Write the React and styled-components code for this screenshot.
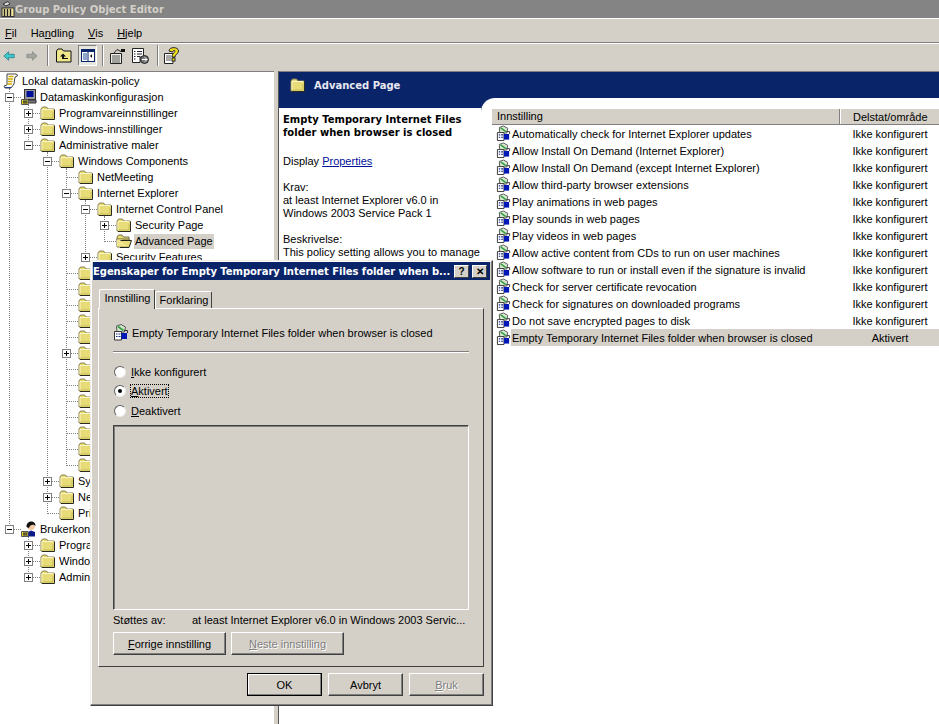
import styled, { createGlobalStyle } from "styled-components";

const GlobalStyle = createGlobalStyle`
  html, body {
    margin: 0;
    padding: 0;
    background: #d4d0c8;
  }
  body {
    font-family: "Liberation Sans", Arial, sans-serif;
    font-size: 11px;
    color: #000;
  }
  u { text-underline-offset: 1px; }
`;

const FolderIcon = () => (
  <svg width="16" height="14" viewBox="0 0 16 14">
    <path d="M1 3 L2.5 1 H6.5 L8 3 H14 V13 H1 Z" fill="#e4d870" stroke="#8a8350" strokeWidth="1" />
    <rect x="2" y="4" width="12" height="9" fill="#e8dc78" />
    <path d="M2 12 H13 V6" stroke="#c8bc58" fill="none" />
    <path d="M14.5 3.5 V13.5 H2" stroke="#2a2a20" strokeWidth="1" fill="none" />
    <path d="M2 3.5 H13.5 M2 3.5 V12" stroke="#fbf6c4" strokeWidth="1" fill="none" />
  </svg>
);

const OpenFolderIcon = () => (
  <svg width="16" height="14" viewBox="0 0 16 14">
    <path d="M1 3 L2.5 1 H6 L7.5 3 H13 V6 H1 Z" fill="#e6d96f" stroke="#77704a" />
    <path d="M1 13 V5 H13 V13 Z" fill="#d8cc60" stroke="#77704a" />
    <path d="M1 5.5 H6 L13 12.5 H1 Z" fill="#f0e490" />
    <path d="M4.5 6.5 H15.5 L13 13.5" fill="#e8dc78" stroke="#222" />
    <path d="M4 13.5 H13" stroke="#222" />
  </svg>
);

const ScrollIcon = () => (
  <svg width="16" height="16" viewBox="0 0 16 16">
    <path d="M4 1 H13 L15 2.5 L12 4 L11 11 L8 15 H2 L1 13 L4 12 Z" fill="#fff" stroke="#444" />
    <path d="M5.5 3.5 H10.5 M5 6 H10 M5 8.5 H9.5 M4.5 11 H9" stroke="#d2ac00" strokeWidth="1.3" />
    <path d="M2 14.5 H8" stroke="#1a3a9a" strokeWidth="1" />
  </svg>
);

const ComputerIcon = () => (
  <svg width="16" height="16" viewBox="0 0 16 16">
    <rect x="3.5" y="0.5" width="11" height="10" fill="#9c9c9c" stroke="#333" />
    <rect x="5.5" y="2" width="7" height="6" fill="#00109a" />
    <path d="M4 11 H15 V14 H4 Z" fill="#777" stroke="#333" />
    <path d="M0.5 10.5 H7 V15.5 H0.5 Z" fill="#e4d42a" stroke="#555" />
    <path d="M2 13 H6 M3 11 V15 M5 11 V15" stroke="#333" />
  </svg>
);

const UserIcon = () => (
  <svg width="16" height="16" viewBox="0 0 16 16">
    <circle cx="10" cy="5" r="4" fill="#f2c9a8" />
    <path d="M5.5 6 C5 -1 15 -1 14.5 5 C13 3 9 3 8 7 Z" fill="#111" />
    <path d="M7 15.5 V11 L10 9.5 L14 11 V15.5 Z" fill="#0a1a8a" />
    <path d="M0.5 10.5 H7 V15.5 H0.5 Z" fill="#e4d42a" stroke="#555" />
    <path d="M2 13 H6 M3 11 V15 M5 11 V15" stroke="#333" />
  </svg>
);

const PolicyIcon = () => (
  <svg width="16" height="17" viewBox="0 0 16 17">
    <path d="M3.5 2 L8 0.5 L12.5 3 L11.5 8 H4 Z" fill="#d8e8d0" stroke="#555" />
    <path d="M5 2.5 L10.5 6.5" stroke="#2f9c3e" strokeWidth="1.6" />
    <path d="M1.5 7.5 H8.5 V16 H1.5 Z" fill="#fff" stroke="#333" />
    <path d="M3 10 H4.5 M3 12.5 H4.5 M5.5 10 H7.5 M5.5 12.5 H7.5" stroke="#14288a" strokeWidth="1.2" />
    <rect x="8.5" y="9" width="5.5" height="6" fill="#0018b8" />
    <path d="M11 6.5 H14.5 V9" stroke="#333" fill="none" />
  </svg>
);

const BackIcon = () => (
  <svg width="14" height="12" viewBox="0 0 14 12">
    <path d="M6.5 1 L1 6 L6.5 11 V8 H13 V4 H6.5 Z" fill="#3ccaca" stroke="#2f8088" />
  </svg>
);

const ForwardIcon = () => (
  <svg width="14" height="12" viewBox="0 0 14 12">
    <path d="M7.5 1 L13 6 L7.5 11 V8 H1 V4 H7.5 Z" fill="#a4a4a0" stroke="#8e8e88" />
  </svg>
);

const UpFolderIcon = () => (
  <svg width="16" height="15" viewBox="0 0 16 15">
    <path d="M0.5 3 L2 1 H6 L7.5 3 H15 V14 H0.5 Z" fill="#f0e68c" stroke="#111" />
    <path d="M7 5.5 L4 8.5 H6 V11 H12 V10 H8 V8.5 H10 Z" fill="#111" />
  </svg>
);

const PaneIcon = () => (
  <svg width="14" height="13" viewBox="0 0 14 13">
    <rect x="0.5" y="0.5" width="13" height="12" fill="#fff" stroke="#0a246a" />
    <rect x="1" y="1" width="12" height="2" fill="#0a246a" />
    <path d="M7 1 V12" stroke="#0a246a" />
    <rect x="2" y="4" width="4" height="7" fill="#8fa6cc" />
    <path d="M11 5 L9 7 L11 9 Z" fill="#111" />
  </svg>
);

const PropsIcon = () => (
  <svg width="17" height="16" viewBox="0 0 17 16">
    <path d="M1.5 5.5 H12.5 V15.5 H1.5 Z" fill="#eeeee6" stroke="#222" />
    <path d="M3 8 H11 M3 10 H11 M3 12 H11 M3 14 H11" stroke="#555" />
    <path d="M4.5 5.5 L8 1.5 L12 3.5" fill="none" stroke="#222" />
    <rect x="12" y="1" width="4" height="3" fill="#111" />
  </svg>
);

const ExportIcon = () => (
  <svg width="17" height="16" viewBox="0 0 17 16">
    <path d="M0.5 0.5 H11.5 V9 H8 V14.5 H0.5 Z" fill="#fff" stroke="#222" />
    <path d="M2 3.5 H3.5 M5 3.5 H10 M2 6 H3.5 M5 6 H10 M2 8.5 H3.5 M5 8.5 H8 M2 11 H3.5" stroke="#223" />
    <circle cx="12.5" cy="11.5" r="4" fill="#777" stroke="#222" />
    <path d="M10 11.5 H15 M13 9.5 L15 11.5 L13 13.5" stroke="#fff" fill="none" />
  </svg>
);

const HelpIcon = () => (
  <svg width="16" height="17" viewBox="0 0 16 17">
    <path d="M0.5 6.5 H9 V16.5 H0.5 Z" fill="#fff" stroke="#222" />
    <path d="M2 9 H7 M2 11 H7 M2 13 H7" stroke="#555" />
    <path d="M5 4 C5 -0.5 14.5 -0.5 14.5 4 C14.5 7 11 7 11 10 H8 C8 6 11 6 11 4 C11 3 9 3 8.5 5 Z" fill="#f2e01a" stroke="#222" />
    <rect x="8" y="11" width="3" height="3" fill="#f2e01a" stroke="#222" />
  </svg>
);

const MENU = [
  { key: "fil", hot: "F", rest: "il", left: 5 },
  { key: "handling", before: "Ha", hot: "n", rest: "dling", left: 14 },
  { key: "vis", hot: "V", rest: "is", left: 14 },
  { key: "hjelp", hot: "H", rest: "jelp", left: 14 },
];

const TREE = [
  { level: 0, icon: "scroll", text: "Lokal datamaskin-policy" },
  { level: 1, box: "-", icon: "computer", text: "Datamaskinkonfigurasjon" },
  { level: 2, box: "+", text: "Programvareinnstillinger" },
  { level: 2, box: "+", text: "Windows-innstillinger" },
  { level: 2, box: "-", text: "Administrative maler" },
  { level: 3, box: "-", text: "Windows Components" },
  { level: 4, text: "NetMeeting" },
  { level: 4, box: "-", text: "Internet Explorer" },
  { level: 5, box: "-", text: "Internet Control Panel" },
  { level: 6, box: "+", text: "Security Page" },
  { level: 6, icon: "open", text: "Advanced Page", selected: true },
  { level: 5, box: "+", text: "Security Features" },
  { level: 4, text: "" },
  { level: 4, text: "" },
  { level: 4, text: "" },
  { level: 4, text: "" },
  { level: 4, text: "" },
  { level: 4, box: "+", text: "" },
  { level: 4, text: "" },
  { level: 4, text: "" },
  { level: 4, text: "" },
  { level: 4, text: "" },
  { level: 4, text: "" },
  { level: 4, text: "" },
  { level: 4, text: "" },
  { level: 3, box: "+", text: "System" },
  { level: 3, box: "+", text: "Nettverk" },
  { level: 3, text: "Printere" },
  { level: 1, box: "-", icon: "user", text: "Brukerkonfigurasjon" },
  { level: 2, box: "+", text: "Programvareinnstillinger" },
  { level: 2, box: "+", text: "Windows-innstillinger" },
  { level: 2, box: "+", text: "Administrative maler" },
];

const GUIDES = [
  { x: 9, top: 16, height: 436 },
  { x: 28, top: 32, height: 40 },
  { x: 47, top: 80, height: 360 },
  { x: 66, top: 96, height: 296 },
  { x: 85, top: 128, height: 56 },
  { x: 104, top: 144, height: 24 },
  { x: 28, top: 464, height: 40 },
];

const SETTINGS = [
  "Automatically check for Internet Explorer updates",
  "Allow Install On Demand (Internet Explorer)",
  "Allow Install On Demand (except Internet Explorer)",
  "Allow third-party browser extensions",
  "Play animations in web pages",
  "Play sounds in web pages",
  "Play videos in web pages",
  "Allow active content from CDs to run on user machines",
  "Allow software to run or install even if the signature is invalid",
  "Check for server certificate revocation",
  "Check for signatures on downloaded programs",
  "Do not save encrypted pages to disk",
];

function treeIcon(name) {
  if (name === "scroll") return <ScrollIcon />;
  if (name === "computer") return <ComputerIcon />;
  if (name === "user") return <UserIcon />;
  if (name === "open") return <OpenFolderIcon />;
  return <FolderIcon />;
}

function App() {
  return (
    <Page>
      <GlobalStyle />
      <TitleBar>
        <TitleIcon>
          <svg width="14" height="16" viewBox="0 0 14 16">
            <path d="M2 3 L7 0.5 L9 3 L5 5 Z" fill="#ddd" stroke="#333" />
            <rect x="1" y="7" width="12" height="8.5" fill="#f2e8a0" stroke="#333" />
            <path d="M3.5 8 V15 M6.5 8 V15 M9.5 8 V15" stroke="#222" strokeWidth="1.4" />
          </svg>
        </TitleIcon>
        Group Policy Object Editor
      </TitleBar>
      <MenuBar>
        {MENU.map((m) => (
          <MenuItem key={m.key} $gap={m.left}>
            {m.before}
            <u>{m.hot}</u>
            {m.rest}
          </MenuItem>
        ))}
      </MenuBar>
      <Toolbar>
        <ToolButton $w={12} $after={11}><BackIcon /></ToolButton>
        <ToolButton $w={12} $after={9}><ForwardIcon /></ToolButton>
        <ToolSep />
        <ToolButton $w={16} $after={6} $before={7}><UpFolderIcon /></ToolButton>
        <PressedButton><PaneIcon /></PressedButton>
        <ToolSep />
        <ToolButton $w={17} $after={6} $before={5}><PropsIcon /></ToolButton>
        <ToolButton $w={17} $after={8}><ExportIcon /></ToolButton>
        <ToolSep />
        <ToolButton $w={16} $before={5}><HelpIcon /></ToolButton>
      </Toolbar>
      <Main>
        <Tree>
          {GUIDES.map((g) => (
            <Guide key={g.x + "-" + g.top} $x={g.x} $top={g.top} $h={g.height} />
          ))}
          {TREE.map((row, i) => (
            <TreeRow key={i} $level={row.level}>
              {row.level > 0 && (
                <Connector>
                  {row.box && <Expander>{row.box === "+" ? <Plus /> : <Minus />}</Expander>}
                </Connector>
              )}
              <TreeIcon>{treeIcon(row.icon)}</TreeIcon>
              <TreeLabel $selected={row.selected}>{row.text}</TreeLabel>
            </TreeRow>
          ))}
        </Tree>
        <Splitter />
        <Panel>
          <PanelHeader>
            <FolderIcon />
            <PanelTitle>Advanced Page</PanelTitle>
          </PanelHeader>
          <PanelBody>
            <Description>
              <DescTitle>Empty Temporary Internet Files folder when browser is closed</DescTitle>
              <DisplayLine>
                Display <a href="#properties">Properties</a>
              </DisplayLine>
              <DescBlock>
                Krav:
                <br />
                at least Internet Explorer v6.0 in
                <br />
                Windows 2003 Service Pack 1
              </DescBlock>
              <DescBlock>
                Beskrivelse:
                <br />
                This policy setting allows you to manage
              </DescBlock>
            </Description>
            <ListArea>
              <ListHeader>
                <HeaderCell>Innstilling</HeaderCell>
                <HeaderCellRight>Delstat/område</HeaderCellRight>
              </ListHeader>
              {SETTINGS.map((s) => (
                <ListRow key={s}>
                  <PolicyIcon />
                  <ListName>{s}</ListName>
                  <ListState>Ikke konfigurert</ListState>
                </ListRow>
              ))}
              <ListRow>
                <PolicyIcon />
                <SelectedCells>
                  <ListName>Empty Temporary Internet Files folder when browser is closed</ListName>
                  <ListState>Aktivert</ListState>
                </SelectedCells>
              </ListRow>
            </ListArea>
          </PanelBody>
        </Panel>
      </Main>

      <Dialog>
        <DialogTitle>
          <DialogTitleText>Egenskaper for Empty Temporary Internet Files folder when b...</DialogTitleText>
          <CaptionButton>?</CaptionButton>
          <CaptionButton $close>✕</CaptionButton>
        </DialogTitle>
        <Tabs>
          <Tab $active>Innstilling</Tab>
          <Tab>Forklaring</Tab>
        </Tabs>
        <TabPanel>
          <SettingHead>
            <PolicyIcon />
            Empty Temporary Internet Files folder when browser is closed
          </SettingHead>
          <Rule />
          <RadioRow>
            <Radio />
            <span><u>I</u>kke konfigurert</span>
          </RadioRow>
          <RadioRow>
            <Radio $on />
            <FocusLabel><u>A</u>ktivert</FocusLabel>
          </RadioRow>
          <RadioRow>
            <Radio />
            <span><u>D</u>eaktivert</span>
          </RadioRow>
          <SunkenBox />
          <SupportRow>
            <SupportKey>Støttes av:</SupportKey>
            at least Internet Explorer v6.0 in Windows 2003 Servic...
          </SupportRow>
          <NavRow>
            <NavButton><u>F</u>orrige innstilling</NavButton>
            <NavButton $disabled><u>N</u>este innstilling</NavButton>
          </NavRow>
        </TabPanel>
        <DialogActions>
          <ActionButton $default>OK</ActionButton>
          <ActionButton>Avbryt</ActionButton>
          <ActionButton $disabled><u>B</u>ruk</ActionButton>
        </DialogActions>
      </Dialog>
    </Page>
  );
}

const Page = styled.div`
  position: relative;
  width: 939px;
  height: 724px;
  overflow: hidden;
  display: flex;
  flex-direction: column;
  background: #d4d0c8;
`;
const TitleBar = styled.div`
  height: 18px;
  flex: none;
  display: flex;
  align-items: center;
  padding-left: 1px;
  background: #848484;
  color: #d4d0c8;
  font-family: "DejaVu Sans", sans-serif;
  font-weight: bold;
  font-size: 10px;
`;
const TitleIcon = styled.span`
  width: 14px;
  height: 16px;
  display: flex;
`;
const MenuBar = styled.div`
  height: 19px;
  flex: none;
  padding-top: 4px;
  display: flex;
  align-items: center;
  border-top: 1px solid #fff;
  border-bottom: 1px solid #808080;
  box-shadow: 0 1px 0 #fff;
`;
const MenuItem = styled.span`
  margin-left: ${(p) => p.$gap}px;
`;
const Toolbar = styled.div`
  height: 25px;
  flex: none;
  padding-left: 3px;
  display: flex;
  align-items: center;
`;
const ToolButton = styled.span`
  width: ${(p) => p.$w}px;
  margin-left: ${(p) => p.$before || 0}px;
  margin-right: ${(p) => p.$after || 0}px;
  display: flex;
  justify-content: center;
`;
const PressedButton = styled.span`
  width: 19px;
  height: 21px;
  margin-right: 5px;
  display: flex;
  align-items: center;
  justify-content: center;
  border: 1px solid;
  border-color: #808080 #fff #fff #808080;
  box-sizing: border-box;
  background: #e8e6e0;
`;
const ToolSep = styled.span`
  width: 0;
  height: 21px;
  border-left: 1px solid #808080;
  border-right: 1px solid #fff;
`;
const Main = styled.div`
  flex: 1;
  min-height: 0;
  margin-top: 3px;
  display: flex;
`;
const Tree = styled.div`
  position: relative;
  width: 274px;
  flex: none;
  padding-top: 1px;
  background: #fff;
  border-top: 1px solid #808080;
  box-sizing: border-box;
`;
const Guide = styled.span`
  position: absolute;
  left: ${(p) => p.$x}px;
  top: ${(p) => p.$top}px;
  height: ${(p) => p.$h}px;
  border-left: 1px dotted #808080;
`;
const TreeRow = styled.div`
  position: relative;
  height: 16px;
  display: flex;
  align-items: center;
  padding-left: ${(p) => (p.$level === 0 ? 3 : 5 + 19 * (p.$level - 1))}px;
`;
const Connector = styled.span`
  position: relative;
  width: 16px;
  height: 9px;
  flex: none;
  &::before {
    content: "";
    position: absolute;
    left: 4px;
    right: 0;
    top: 4px;
    border-top: 1px dotted #808080;
  }
`;
const Expander = styled.span`
  position: absolute;
  left: 0;
  top: 0;
  width: 9px;
  height: 9px;
  box-sizing: border-box;
  border: 1px solid #808080;
  background: #fff;
`;
const Minus = styled.span`
  position: absolute;
  left: 1px;
  top: 3px;
  width: 5px;
  height: 1px;
  background: #000;
`;
const Plus = styled(Minus)`
  &::after {
    content: "";
    position: absolute;
    left: 2px;
    top: -2px;
    width: 1px;
    height: 5px;
    background: #000;
  }
`;
const TreeIcon = styled.span`
  width: 16px;
  height: 16px;
  flex: none;
  display: flex;
  align-items: center;
`;
const TreeLabel = styled.span`
  margin-left: 2px;
  padding: 1px 1px 2px;
  white-space: nowrap;
  background: ${(p) => (p.$selected ? "#d4d0c8" : "transparent")};
`;
const Splitter = styled.div`
  width: 4px;
  flex: none;
  background: #d4d0c8;
  border-right: 1px solid #555;
`;
const Panel = styled.div`
  flex: 1;
  min-width: 0;
  display: flex;
  flex-direction: column;
  background: #fff;
  border-top: 1px solid #808080;
`;
const PanelHeader = styled.div`
  height: 26px;
  flex: none;
  padding-left: 11px;
  display: flex;
  align-items: center;
  background: #0a246a;
`;
const PanelTitle = styled.span`
  margin-left: 8px;
  color: #e8e8f0;
  font-family: "DejaVu Sans", sans-serif;
  font-weight: bold;
  font-size: 10px;
`;
const PanelBody = styled.div`
  flex: 1;
  display: flex;
  min-height: 0;
  background: #0a246a;
`;
const Description = styled.div`
  width: 202px;
  flex: none;
  box-sizing: border-box;
  padding: 5px 0 0 4px;
  border-top: 10px solid #0a246a;
  background: #fff;
  line-height: 13px;
  a { color: #00109a; }
`;
const DescTitle = styled.div`
  font-family: "DejaVu Sans", sans-serif;
  font-weight: bold;
  font-size: 10px;
  width: 190px;
`;
const DisplayLine = styled.div`
  margin-top: 16px;
`;
const DescBlock = styled.div`
  margin-top: 13px;
  white-space: nowrap;
`;
const ListArea = styled.div`
  flex: 1;
  min-width: 0;
  padding: 11px 0 0 11px;
  background: #fff;
  border-top-left-radius: 14px;
`;
const ListHeader = styled.div`
  height: 16px;
  display: flex;
  align-items: center;
  background: #d4d0c8;
  border-bottom: 1px solid #808080;
  box-sizing: border-box;
`;
const HeaderCell = styled.span`
  width: 348px;
  height: 100%;
  box-sizing: border-box;
  padding: 1px 0 0 5px;
  border-right: 1px solid #808080;
  box-shadow: 1px 0 0 #fff;
`;
const HeaderCellRight = styled.span`
  padding: 1px 0 0 13px;
`;
const ListRow = styled.div`
  height: 17px;
  display: flex;
  align-items: center;
  padding-left: 4px;
`;
const ListName = styled.span`
  width: 329px;
  flex: none;
  margin-left: 1px;
  white-space: nowrap;
`;
const ListState = styled.span`
  width: 98px;
  flex: none;
  text-align: center;
`;
const SelectedCells = styled.div`
  flex: 1;
  height: 17px;
  display: flex;
  align-items: center;
  background: #d4d0c8;
`;
const Dialog = styled.div`
  position: absolute;
  left: 90px;
  top: 260px;
  width: 403px;
  height: 446px;
  box-sizing: border-box;
  padding: 1px 2px;
  background: #d4d0c8;
  border: 1px solid;
  border-color: #f0eee8 #404040 #404040 #f0eee8;
  box-shadow: inset -1px -1px 0 #808080, inset 1px 1px 0 #fff;
`;
const DialogTitle = styled.div`
  height: 18px;
  display: flex;
  align-items: center;
  padding: 0 3px 0 0;
  background: #0a246a;
`;
const DialogTitleText = styled.span`
  flex: 1;
  min-width: 0;
  overflow: hidden;
  color: #fff;
  font-family: "DejaVu Sans", sans-serif;
  font-weight: bold;
  font-size: 10px;
  letter-spacing: -0.05px;
  white-space: nowrap;
`;
const CaptionButton = styled.span`
  width: 15px;
  height: 13px;
  flex: none;
  margin-left: ${(p) => (p.$close ? 3 : 0)}px;
  display: flex;
  align-items: center;
  justify-content: center;
  box-sizing: border-box;
  background: #d4d0c8;
  border: 1px solid;
  border-color: #fff #404040 #404040 #fff;
  color: #000;
  font-weight: bold;
  font-size: 10px;
`;
const Tabs = styled.div`
  height: 20px;
  margin: 8px 0 0 5px;
  padding-left: 1px;
  display: flex;
  align-items: flex-end;
`;
const Tab = styled.span`
  position: relative;
  z-index: ${(p) => (p.$active ? 1 : 0)};
  width: ${(p) => (p.$active ? 56 : 57)}px;
  height: ${(p) => (p.$active ? 20 : 17)}px;
  box-sizing: border-box;
  margin-bottom: ${(p) => (p.$active ? -1 : 0)}px;
  padding: 0 0 ${(p) => (p.$active ? 3 : 0)}px 1px;
  display: flex;
  align-items: center;
  justify-content: center;
  background: #d4d0c8;
  border: 1px solid;
  border-bottom: 0;
  border-color: #fff #404040 #d4d0c8 #fff;
  border-radius: 2px 2px 0 0;
`;
const TabPanel = styled.div`
  height: 359px;
  margin: 0 6px 0 5px;
  padding: 15px 14px 0;
  box-sizing: border-box;
  border: 1px solid;
  border-color: #fff #404040 #404040 #fff;
`;
const SettingHead = styled.div`
  height: 17px;
  display: flex;
  align-items: center;
  gap: 3px;
`;
const Rule = styled.div`
  height: 0;
  margin: 10px 0 9px;
  border-top: 1px solid #808080;
  border-bottom: 1px solid #fff;
`;
const RadioRow = styled.div`
  height: 19.5px;
  display: flex;
  align-items: center;
  gap: 5px;
  padding-left: 1px;
`;
const Radio = styled.span`
  position: relative;
  width: 12px;
  height: 12px;
  flex: none;
  box-sizing: border-box;
  border-radius: 50%;
  background: #fff;
  border: 1px solid;
  border-color: #606060 #eee #eee #606060;
  &::after {
    content: "";
    display: ${(p) => (p.$on ? "block" : "none")};
    position: absolute;
    left: 3px;
    top: 3px;
    width: 4px;
    height: 4px;
    border-radius: 50%;
    background: #000;
  }
`;
const FocusLabel = styled.span`
  outline: 1px dotted #000;
`;
const SunkenBox = styled.div`
  height: 185px;
  margin-top: 4.5px;
  box-sizing: border-box;
  border: 1px solid;
  border-color: #404040 #fff #fff #404040;
  box-shadow: inset 1px 1px 0 #808080;
`;
const SupportRow = styled.div`
  margin-top: 2px;
  height: 16px;
  display: flex;
  align-items: center;
  white-space: nowrap;
`;
const SupportKey = styled.span`
  width: 79px;
  flex: none;
`;
const NavRow = styled.div`
  margin-top: 4px;
  display: flex;
  gap: 5px;
`;
const RaisedButton = styled.span`
  height: 23px;
  box-sizing: border-box;
  display: flex;
  align-items: center;
  justify-content: center;
  background: #d4d0c8;
  border: 1px solid;
  border-color: #fff #404040 #404040 #fff;
  box-shadow: inset -1px -1px 0 #808080;
  color: ${(p) => (p.$disabled ? "#808080" : "#000")};
  text-shadow: ${(p) => (p.$disabled ? "1px 1px 0 #fff" : "none")};
`;
const NavButton = styled(RaisedButton)`
  width: 113px;
`;
const ActionButton = styled(RaisedButton)`
  width: 75px;
  ${(p) => p.$default && "border-color: #000; box-shadow: inset -1px -1px 0 #808080, inset 1px 1px 0 #fff;"}
`;
const DialogActions = styled.div`
  margin: 6px 6px 0 0;
  display: flex;
  justify-content: flex-end;
  gap: 6px;
`;

export default App;
